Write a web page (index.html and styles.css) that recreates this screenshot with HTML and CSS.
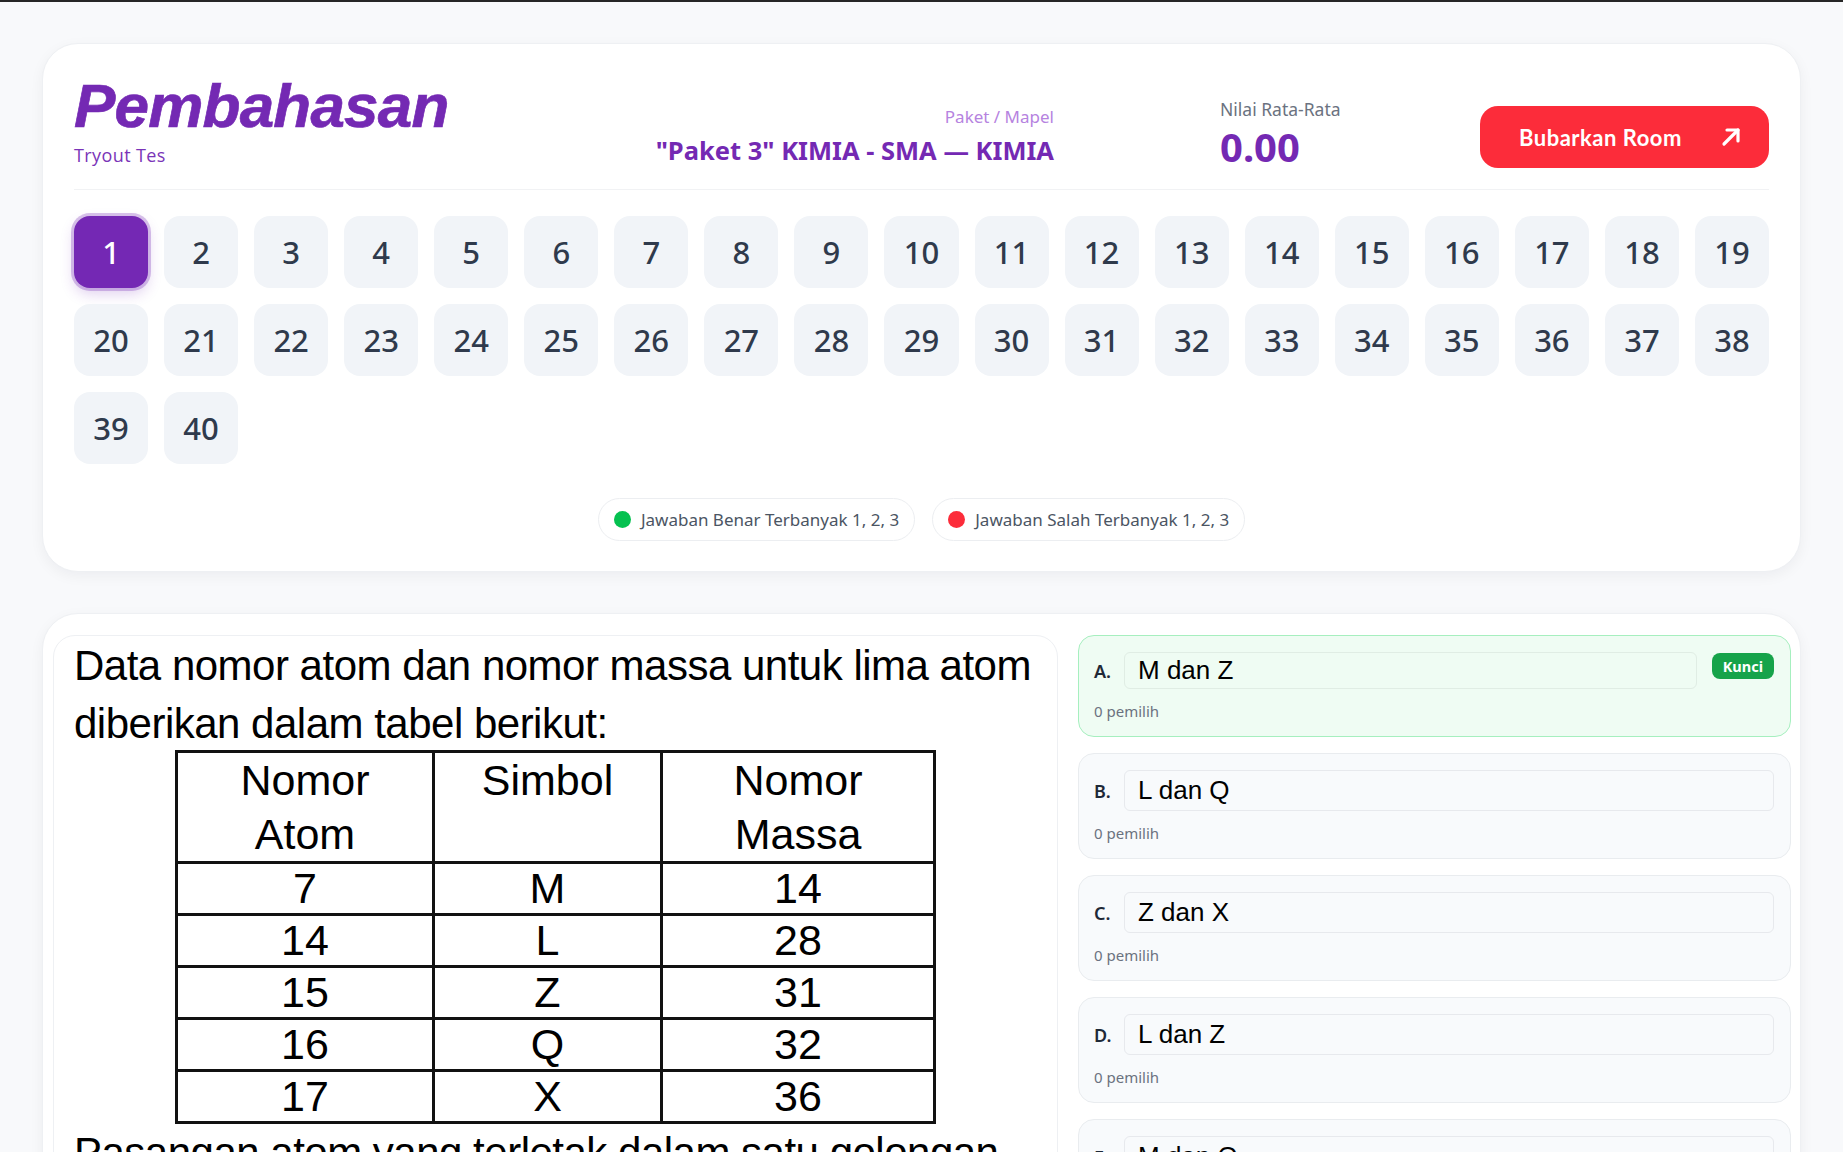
FILE: index.html
```html
<!DOCTYPE html>
<html lang="id">
<head>
<meta charset="utf-8">
<title>Pembahasan</title>
<link rel="stylesheet" href="styles.css">
</head>
<body>
<div class="page">
  <section class="card summary">
    <header class="head">
      <div class="title-block">
        <h1 class="title">Pembahasan</h1>
        <div class="subtitle">Tryout Tes</div>
      </div>
      <div class="paket">
        <div class="paket-label">Paket / Mapel</div>
        <div class="paket-value">"Paket 3" KIMIA - SMA — KIMIA</div>
      </div>
      <div class="nilai">
        <div class="nilai-label">Nilai Rata-Rata</div>
        <div class="nilai-value">0.00</div>
      </div>
      <button class="btn-bubar">
        <span>Bubarkan Room</span>
        <svg class="arrow" width="22" height="22" viewBox="0 0 22 22" fill="none" stroke="#fff" stroke-width="3.2" stroke-linecap="round" stroke-linejoin="round"><path d="M4 18 L18 4"/><path d="M7 4 H18 V15"/></svg>
      </button>
    </header>
    <nav class="grid">
      <button class="num active">1</button>
      <button class="num">2</button><button class="num">3</button><button class="num">4</button><button class="num">5</button>
      <button class="num">6</button><button class="num">7</button><button class="num">8</button><button class="num">9</button>
      <button class="num">10</button><button class="num">11</button><button class="num">12</button><button class="num">13</button>
      <button class="num">14</button><button class="num">15</button><button class="num">16</button><button class="num">17</button>
      <button class="num">18</button><button class="num">19</button><button class="num">20</button><button class="num">21</button>
      <button class="num">22</button><button class="num">23</button><button class="num">24</button><button class="num">25</button>
      <button class="num">26</button><button class="num">27</button><button class="num">28</button><button class="num">29</button>
      <button class="num">30</button><button class="num">31</button><button class="num">32</button><button class="num">33</button>
      <button class="num">34</button><button class="num">35</button><button class="num">36</button><button class="num">37</button>
      <button class="num">38</button><button class="num">39</button><button class="num">40</button>
    </nav>
    <div class="legend">
      <div class="pill"><span class="dot green"></span>Jawaban Benar Terbanyak 1, 2, 3</div>
      <div class="pill"><span class="dot red"></span>Jawaban Salah Terbanyak 1, 2, 3</div>
    </div>
  </section>

  <section class="card detail">
    <article class="question">
      <p class="q-text">Data nomor atom dan nomor massa untuk lima atom diberikan dalam tabel berikut:</p>
      <table class="q-table">
        <colgroup><col class="c1"><col class="c2"><col class="c3"></colgroup>
        <tr><th>Nomor<br>Atom</th><th>Simbol</th><th>Nomor<br>Massa</th></tr>
        <tr><td>7</td><td>M</td><td>14</td></tr>
        <tr><td>14</td><td>L</td><td>28</td></tr>
        <tr><td>15</td><td>Z</td><td>31</td></tr>
        <tr><td>16</td><td>Q</td><td>32</td></tr>
        <tr><td>17</td><td>X</td><td>36</td></tr>
      </table>
      <p class="q-text">Pasangan atom yang terletak dalam satu golongan adalah ....</p>
    </article>
    <div class="options">
      <div class="opt correct">
        <div class="opt-row">
          <span class="opt-letter">A.</span>
          <div class="opt-box">M dan Z</div>
          <span class="badge">Kunci</span>
        </div>
        <div class="opt-count">0 pemilih</div>
      </div>
      <div class="opt">
        <div class="opt-row">
          <span class="opt-letter">B.</span>
          <div class="opt-box">L dan Q</div>
        </div>
        <div class="opt-count">0 pemilih</div>
      </div>
      <div class="opt">
        <div class="opt-row">
          <span class="opt-letter">C.</span>
          <div class="opt-box">Z dan X</div>
        </div>
        <div class="opt-count">0 pemilih</div>
      </div>
      <div class="opt">
        <div class="opt-row">
          <span class="opt-letter">D.</span>
          <div class="opt-box">L dan Z</div>
        </div>
        <div class="opt-count">0 pemilih</div>
      </div>
      <div class="opt">
        <div class="opt-row">
          <span class="opt-letter">E.</span>
          <div class="opt-box">M dan Q</div>
        </div>
        <div class="opt-count">0 pemilih</div>
      </div>
    </div>
  </section>
</div>
</body>
</html>
```

FILE: styles.css
```css
* { box-sizing: border-box; }

body {
  margin: 0;
  background: #f8f9fb;
  border-top: 2px solid #262626;
  font-family: "Noto Sans", "Open Sans", sans-serif;
  color: #1f2937;
}

.page {
  padding: 41px 42px 0 42px;
}

.card {
  background: #ffffff;
  border: 1px solid #eef0f3;
  border-radius: 36px;
  box-shadow: 0 4px 14px rgba(15, 23, 42, 0.05);
}

.summary {
  padding: 31px 31px 30px 31px;
}

.head {
  display: flex;
  align-items: flex-end;
  padding-bottom: 22px;
  border-bottom: 1px solid #f1f2f4;
}

.title-block {
  flex: 1;
}

.title {
  margin: 0;
  font-family: "Liberation Sans", Arial, sans-serif;
  font-weight: 700;
  font-style: italic;
  font-size: 62px;
  line-height: 62px;
  letter-spacing: -0.8px;
  color: #7429b3;
  -webkit-text-stroke: 0.7px #7429b3;
}

.subtitle {
  margin-top: 6px;
  font-family: "Open Sans", sans-serif;
  font-size: 18px;
  line-height: 24px;
  letter-spacing: 0.4px;
  color: #7a34b8;
}

.paket {
  text-align: right;
  margin-right: 166px;
  margin-bottom: 0;
}

.paket-label {
  font-size: 17px;
  line-height: 24px;
  color: #b683df;
  margin-bottom: 4px;
}

.paket-value {
  font-size: 25.5px;
  line-height: 34px;
  font-weight: 700;
  color: #7429b3;
}

.nilai {
  width: 260px;
}

.nilai-label {
  font-size: 17.5px;
  line-height: 24px;
  color: #6b7280;
  margin-bottom: 6px;
}

.nilai-value {
  font-size: 40px;
  line-height: 40px;
  font-weight: 700;
  color: #7429b3;
}

.btn-bubar {
  width: 289px;
  height: 62px;
  margin-bottom: -1px;
  border: none;
  border-radius: 18px;
  background: #fc2c3a;
  color: #ffffff;
  display: flex;
  align-items: center;
  justify-content: space-between;
  padding: 0 27px 0 39px;
  font-family: "Lato", sans-serif;
  font-weight: 700;
  font-size: 22px;
  letter-spacing: 0.5px;
}

.arrow {
  display: block;
}

.grid {
  margin-top: 26px;
  display: grid;
  grid-template-columns: repeat(19, 1fr);
  column-gap: 16px;
  row-gap: 16px;
}

.num {
  height: 72px;
  border: none;
  border-radius: 16px;
  background: #f1f4f8;
  color: #2f3a4c;
  font-family: "Noto Sans", sans-serif;
  font-size: 31px;
  font-weight: 500;
  padding: 0;
}

.num.active {
  background: #7428b4;
  color: #ffffff;
  box-shadow: 0 0 0 3px rgba(116, 40, 180, 0.28), 0 6px 14px rgba(116, 40, 180, 0.22);
}

.legend {
  margin-top: 34px;
  display: flex;
  justify-content: center;
  gap: 17px;
}

.pill {
  height: 43px;
  display: flex;
  align-items: center;
  gap: 10px;
  padding: 0 15px 0 15px;
  border: 1px solid #eceef1;
  border-radius: 999px;
  background: #ffffff;
  font-size: 17px;
  color: #4b5563;
}

.dot {
  width: 17px;
  height: 17px;
  border-radius: 50%;
  display: inline-block;
}

.dot.green { background: #05c150; }
.dot.red { background: #fc2c3a; }

.detail {
  margin-top: 41px;
  padding: 21px 9px 20px 10px;
  display: flex;
  gap: 20px;
  align-items: flex-start;
}

.question {
  width: 1005px;
  flex: none;
  border: 1px solid #eef0f3;
  border-radius: 22px;
  padding: 1px 20px 20px 20px;
  font-family: "Liberation Sans", Arial, sans-serif;
  color: #000000;
}

.q-text {
  margin: 0;
  font-size: 42px;
  line-height: 57.6px;
  letter-spacing: -0.5px;
}

.q-table {
  margin: -2px auto 0 auto;
  border-collapse: collapse;
  border: 3px solid #111;
  font-size: 43px;
  text-align: center;
}

.q-table .c1 { width: 257px; }
.q-table .c2 { width: 228px; }
.q-table .c3 { width: 273px; }

.q-table th,
.q-table td {
  border: 3px solid #111;
  padding: 0;
  font-weight: 400;
}

.q-table th {
  vertical-align: top;
  line-height: 54px;
}

.q-table td {
  line-height: 49px;
}

.options {
  flex: 1;
  display: flex;
  flex-direction: column;
  gap: 16px;
}

.opt {
  border: 1px solid #e9ecef;
  border-radius: 16px;
  background: #f8fafc;
  padding: 16px 16px 15px 15px;
}

.opt.correct {
  background: #effcf3;
  border-color: #a6efbf;
}

.opt-row {
  display: flex;
  align-items: center;
  gap: 12px;
}

.opt-letter {
  width: 18px;
  flex: none;
  font-size: 18px;
  font-weight: 600;
  color: #1f2937;
}

.opt-box {
  flex: 1;
  border: 1px solid #e7e9ed;
  border-radius: 6px;
  background: #f8fafc;
  padding: 4px 13px;
  font-family: "Liberation Sans", Arial, sans-serif;
  font-size: 26px;
  line-height: 31px;
  color: #000000;
}

.opt.correct .opt-box {
  background: #effcf3;
  border-color: #e0ede4;
  padding: 2px 13px;
}

.badge {
  align-self: flex-start;
  margin-top: 1px;
  margin-left: 3px;
  height: 26px;
  padding: 0 11px;
  border-radius: 8px;
  background: #16a34a;
  color: #ffffff;
  font-size: 14.5px;
  font-weight: 700;
  line-height: 26px;
}

.opt-count {
  margin-top: 12px;
  font-size: 15px;
  line-height: 20px;
  color: #6b7280;
}
```
